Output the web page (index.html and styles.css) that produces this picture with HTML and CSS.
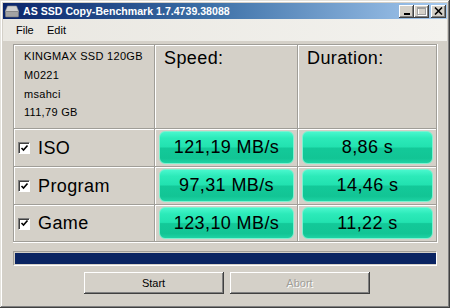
FILE: index.html
```html
<!DOCTYPE html>
<html>
<head>
<meta charset="utf-8">
<link rel="stylesheet" href="styles.css">
</head>
<body>
<div class="window">
  <div class="titlebar">
    <svg class="app-icon" width="14" height="13" viewBox="0 0 14 13">
      <path d="M2.5 1h9l2.5 6H0z" fill="#cfcfcf" stroke="#8a8a8a" stroke-width="0.6"/>
      <rect x="0.3" y="6.5" width="13.4" height="5.5" rx="1" fill="#a3a3a3" stroke="#6f6f6f" stroke-width="0.6"/>
    </svg>
    <span class="title">AS SSD Copy-Benchmark 1.7.4739.38088</span>
    <div class="caption">
      <span class="cbtn"><svg width="8" height="7" viewBox="0 0 8 7"><rect x="1" y="5" width="6" height="2" fill="#000"/></svg></span>
      <span class="cbtn"><svg width="10" height="9" viewBox="0 0 10 9"><rect x="1.5" y="1.5" width="8" height="7" fill="none" stroke="#fff"/><rect x="0.5" y="0.5" width="8" height="7" fill="none" stroke="#a0a0a0"/><rect x="0.5" y="0.5" width="8" height="1.5" fill="#a0a0a0"/></svg></span>
      <span class="cbtn close"><svg width="9" height="8" viewBox="0 0 9 8"><path d="M1 0.5l7 7M8 0.5l-7 7" stroke="#000" stroke-width="1.6"/></svg></span>
    </div>
  </div>
  <div class="menubar">
    <span class="menu-item">File</span>
    <span class="menu-item">Edit</span>
  </div>
  <div class="content">
    <div class="grid">
      <div class="cell info">
        <div>KINGMAX SSD 120GB</div>
        <div>M0221</div>
        <div>msahci</div>
        <div>111,79 GB</div>
      </div>
      <div class="cell head">Speed:</div>
      <div class="cell head">Duration:</div>

      <div class="cell label"><span class="check"><svg width="9" height="9" viewBox="0 0 9 9"><path d="M1.5 4l2 2 4-4.5" fill="none" stroke="#000" stroke-width="1.6"/></svg></span><span>ISO</span></div>
      <div class="cell val"><div class="lcd">121,19 MB/s</div></div>
      <div class="cell val"><div class="lcd">8,86 s</div></div>

      <div class="cell label"><span class="check"><svg width="9" height="9" viewBox="0 0 9 9"><path d="M1.5 4l2 2 4-4.5" fill="none" stroke="#000" stroke-width="1.6"/></svg></span><span>Program</span></div>
      <div class="cell val"><div class="lcd">97,31 MB/s</div></div>
      <div class="cell val"><div class="lcd">14,46 s</div></div>

      <div class="cell label"><span class="check"><svg width="9" height="9" viewBox="0 0 9 9"><path d="M1.5 4l2 2 4-4.5" fill="none" stroke="#000" stroke-width="1.6"/></svg></span><span>Game</span></div>
      <div class="cell val"><div class="lcd">123,10 MB/s</div></div>
      <div class="cell val"><div class="lcd">11,22 s</div></div>
    </div>
    <div class="progress"><div class="fill"></div></div>
    <div class="buttons">
      <button class="btn">Start</button>
      <button class="btn disabled">Abort</button>
    </div>
  </div>
</div>
</body>
</html>
```
FILE: styles.css
```css
html, body {
  margin: 0;
  padding: 0;
  background: #d4d0c8;
}
body {
  width: 450px;
  height: 308px;
  overflow: hidden;
  font-family: "Liberation Sans", Arial, sans-serif;
}
.window {
  box-sizing: border-box;
  width: 450px;
  height: 308px;
  padding: 3px;
  background: #d4d0c8;
  box-shadow: inset -1px -1px #404040, inset 1px 1px #e4e2dc, inset -2px -2px #808080, inset 2px 2px #fff;
  display: flex;
  flex-direction: column;
}
.titlebar {
  height: 16px;
  display: flex;
  align-items: center;
  background: linear-gradient(to right, #0a246a 0%, #3a6ea5 45%, #a6caf0 100%);
  padding-left: 2px;
}
.app-icon {
  flex: none;
  margin-right: 4px;
}
.title {
  color: #fff;
  font-weight: bold;
  font-size: 10.6px;
  white-space: nowrap;
  flex: 1;
}
.caption {
  display: flex;
  align-items: center;
  padding-right: 1px;
}
.cbtn {
  box-sizing: border-box;
  width: 15px;
  height: 13px;
  background: #d4d0c8;
  box-shadow: inset -1px -1px #404040, inset 1px 1px #fff, inset -2px -2px #808080;
  display: flex;
  align-items: center;
  justify-content: center;
}
.cbtn.close {
  margin-left: 2px;
}
.menubar {
  height: 22px;
  display: flex;
  align-items: center;
  background: linear-gradient(to right, #e9e7e1, #f3f2ee);
  font-size: 11px;
}
.menu-item {
  padding: 0 0 0 13px;
  width: 18px;
}
.menu-item + .menu-item {
  padding-left: 13px;
}
.content {
  flex: 1;
  padding: 3px 10px 0 10px;
  display: flex;
  flex-direction: column;
}
.grid {
  display: grid;
  grid-template-columns: 140px 142px 138px;
  grid-template-rows: 83px 37px 37px 36px;
  gap: 1px;
  padding: 1px;
  background: #a09e98;
  border-right: 1px solid #fff;
  border-bottom: 1px solid #fff;
  width: max-content;
}
.cell {
  background: #d4d0c8;
  border-top: 1px solid #fff;
  border-left: 1px solid #fff;
  box-sizing: border-box;
}
.info {
  padding: 1px 0 0 9px;
  font-size: 11px;
  letter-spacing: 0.3px;
  line-height: 18.8px;
  color: #000;
}
.head {
  padding: 2px 0 0 8px;
  font-size: 18px;
  letter-spacing: 0.4px;
  line-height: 20px;
}
.label {
  display: flex;
  align-items: center;
  padding-left: 3px;
  font-size: 18px;
  letter-spacing: 0.4px;
}
.check {
  box-sizing: border-box;
  width: 12px;
  height: 12px;
  background: #fff;
  border: 1px solid;
  border-color: #808080 #fff #fff #808080;
  box-shadow: inset 1px 1px #404040;
  margin-right: 8px;
  display: flex;
  align-items: center;
  justify-content: center;
}
.val {
  padding: 1px 3px 2px 3px;
  display: flex;
}
.lcd {
  flex: 1;
  border-radius: 6px;
  border: 1px solid #7cf2d0;
  background: linear-gradient(to bottom, #48f7cd 0%, #2ceab9 20%, #22e2b0 48%, #13c999 52%, #12c595 85%, #1ed3a4 100%);
  display: flex;
  align-items: center;
  justify-content: center;
  font-size: 18px;
  letter-spacing: 0.4px;
  color: #000;
}
.progress {
  box-sizing: border-box;
  margin-top: 8px;
  height: 15px;
  width: 424px;
  border: 1px solid;
  border-color: #a09e98 #fff #fff #a09e98;
  padding: 1px 0 1px 1px;
  display: flex;
}
.fill {
  flex: 1;
  background: #0a2462;
}
.buttons {
  display: flex;
  justify-content: center;
  gap: 6px;
  margin-top: 6px;
  padding-left: 3px;
}
.btn {
  box-sizing: border-box;
  width: 140px;
  height: 22px;
  background: #d4d0c8;
  border: none;
  box-shadow: inset -1px -1px #404040, inset 1px 1px #fff, inset -2px -2px #808080;
  font-family: "Liberation Sans", Arial, sans-serif;
  font-size: 11px;
  color: #000;
  padding: 0;
}
.btn.disabled {
  color: #a09e98;
  text-shadow: 1px 1px #fff;
}
```
